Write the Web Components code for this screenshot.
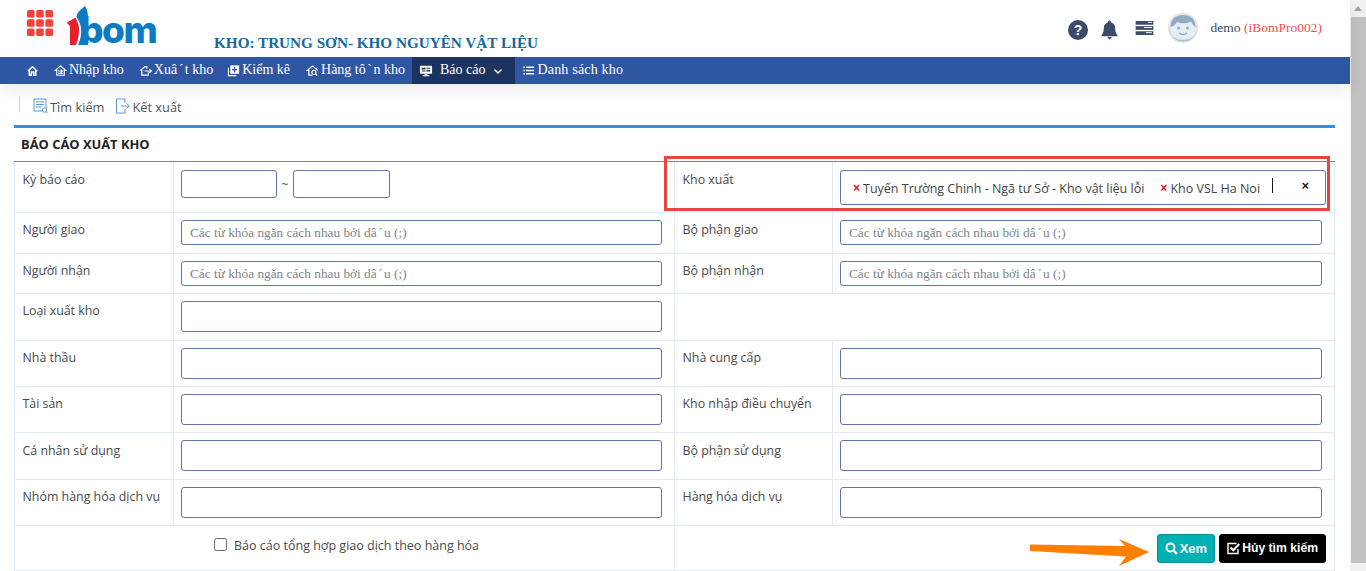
<!DOCTYPE html>
<html lang="vi">
<head>
<meta charset="utf-8">
<title>Báo cáo xuất kho</title>
<style>
  html, body { margin: 0; height: 100%; overflow: hidden; background: #fff; }
  body { font-family: "Open Sans", "Noto Sans", sans-serif; }
  .ac { margin: 0 1.500px; }
</style>
</head>
<body>
<app-shell>
  <app-header slot="head" store="KHO: TRUNG SƠN- KHO NGUYÊN VẬT LIỆU" user="demo" code="(iBomPro002)"></app-header>
  <app-nav slot="head">
    <nav-item icon="home"></nav-item>
    <nav-item icon="in" style="padding:0 8px 0 6px">Nhập kho</nav-item>
    <nav-item icon="out">Xuâ<span class="ac">´</span>t kho</nav-item>
    <nav-item icon="check" style="margin-right:2px">Kiểm kê</nav-item>
    <nav-item icon="stock">Hàng tô<span class="ac">`</span>n kho</nav-item>
    <nav-item icon="report" active caret>Báo cáo</nav-item>
    <nav-item icon="list" style="letter-spacing:.2px">Danh sách kho</nav-item>
  </app-nav>
  <tool-bar>
    <tool-btn icon="search">Tìm kiếm</tool-btn>
    <tool-btn icon="export">Kết xuất</tool-btn>
  </tool-bar>
  <report-form heading="BÁO CÁO XUẤT KHO">
    <form-row h="51">
      <form-cell first top label="Kỳ báo cáo"><date-range></date-range></form-cell>
      <form-cell top label="Kho xuất"><multi-select><sel-tag>Tuyến Trường Chinh - Ngã tư Sở - Kho vật liệu lỗi</sel-tag><sel-tag>Kho VSL Ha Noi</sel-tag></multi-select></form-cell>
    </form-row>
    <form-row h="41">
      <form-cell first label="Người giao"><text-box hint></text-box></form-cell>
      <form-cell label="Bộ phận giao"><text-box hint></text-box></form-cell>
    </form-row>
    <form-row h="40">
      <form-cell first label="Người nhận"><text-box hint></text-box></form-cell>
      <form-cell label="Bộ phận nhận"><text-box hint></text-box></form-cell>
    </form-row>
    <form-row h="47">
      <form-cell first label="Loại xuất kho"><text-box tall></text-box></form-cell>
      <form-cell></form-cell>
    </form-row>
    <form-row h="46">
      <form-cell first label="Nhà thầu"><text-box tall></text-box></form-cell>
      <form-cell label="Nhà cung cấp"><text-box tall></text-box></form-cell>
    </form-row>
    <form-row h="46">
      <form-cell first label="Tài sản"><text-box tall></text-box></form-cell>
      <form-cell label="Kho nhập điều chuyển"><text-box tall></text-box></form-cell>
    </form-row>
    <form-row h="47">
      <form-cell first top label="Cá nhân sử dụng"><text-box tall></text-box></form-cell>
      <form-cell top label="Bộ phận sử dụng"><text-box tall></text-box></form-cell>
    </form-row>
    <form-row h="46">
      <form-cell first label="Nhóm hàng hóa dịch vụ"><text-box tall></text-box></form-cell>
      <form-cell label="Hàng hóa dịch vụ"><text-box tall></text-box></form-cell>
    </form-row>
    <form-foot>
      <check-line slot="left">Báo cáo tổng hợp giao dịch theo hàng hóa</check-line>
      <action-btn slot="right" kind="view">Xem</action-btn>
      <action-btn slot="right" kind="clear">Hủy tìm kiếm</action-btn>
    </form-foot>
  </report-form>
  <note-marks></note-marks>
</app-shell>

<script>
  const ICONS = {
    home: '<path d="M2 7.500 7 3l5 4.500M3.500 6.500V12h2.200V8.500h2.600V12h2.200V6.500" fill="none" stroke="#fff" stroke-width="1.600"/>',
    in: '<path d="M7 2 1.500 6.800h1.500V12h8V6.800h1.500zM4.500 7.500h4.500M7.200 5.700 9 7.500 7.200 9.300M4.500 10h5" fill="none" stroke="#fff" stroke-width="1.200"/>',
    out: '<path d="M1.500 7 6 3h2.500l-.2 2M3 6v6h7V9M6 7.500h7M11 5.500l2.200 2L11 9.500" fill="none" stroke="#fff" stroke-width="1.300"/>',
    check: '<path d="M1.500 4v8.500H10" fill="none" stroke="#fff" stroke-width="1.200"/><rect x="3.500" y="1.500" width="9.500" height="9" fill="#fff"/><path d="M8.200 3v6M5.300 6h5.800" stroke="#2f56a3" stroke-width="1.300"/>',
    stock: '<path d="M7 2 1.500 6.800H3V12h4M7 2l5.500 4.800M11 5.500V4" fill="none" stroke="#fff" stroke-width="1.300"/><circle cx="8.500" cy="9" r="2.200" fill="none" stroke="#fff" stroke-width="1.200"/><path d="m10 10.500 2 2" stroke="#fff" stroke-width="1.300"/>',
    report: '<rect x="1" y="2" width="13" height="8.500" rx=".8" fill="#fff"/><path d="M3 4h4v2H3zM8 4h4v1H8zM8 6.500h4v1.500H8zM3 7h4v1H3z" fill="#1c3360"/><path d="M6 10.500h3V12h2v1H4v-1h2z" fill="#fff"/>',
    list: '<path d="M1.500 3.500h1.500M1.500 7h1.500M1.500 10.500h1.500M4.200 3.500H13M4.200 7H13M4.200 10.500H13" stroke="#fff" stroke-width="1.600" fill="none"/>'
  }

  class AppShell extends HTMLElement {
    constructor(){
      super()
      this.attachShadow({ mode: 'open' }).innerHTML = `
        <style>
          :host{ display: flex; height: 571px; width: 1366px; overflow: hidden; position: relative; }
          #page{ width: 1350px; display: flex; flex-direction: column; position: relative; }
          #head{ position: relative; z-index: 2; box-shadow: 0 6px 16px rgba(0,0,0,.08); }
          #bar{ width: 16px; background: #f1f1f1; position: relative; display: flex; flex-direction: column; align-items: center; }
          #arrow{ height: 17px; width: 100%; display: flex; align-items: center; justify-content: center; }
          #arrow i{ border: 4px solid transparent; border-top: 0; border-bottom: 5px solid #a3a3a3; }
          #thumb{ width: 15px; margin-left: 1px; height: 546px; background: #c1c1c1; }
        </style>
        <div id=page>
          <div id=head><slot name=head></slot></div>
          <slot></slot>
        </div>
        <div id=bar><div id=arrow><i></i></div><div id=thumb></div></div>`
    }
  }

  class AppHeader extends HTMLElement {
    constructor(){
      super()
      const dots = []
      for (let y = 0; y < 3; y++) for (let x = 0; x < 3; x++) dots.push(`<rect x="${x*9.200}" y="${y*9.200}" width="7.600" height="7.600" rx="1.500"/>`)
      this.attachShadow({ mode: 'open' }).innerHTML = `
        <style>
          :host{ display: flex; height: 57px; background: #fff; align-items: flex-start; }
          #grid{ margin: 10px 0 0 27px; width: 26px; height: 26px; fill: #f4423a; flex: none; }
          #logo{ margin: 5px 0 0 13px; width: 93px; height: 42px; position: relative; flex: none; }
          #logo svg{ position: absolute; left: 0; top: 0; }
          #logo span{ position: absolute; left: 14px; top: 3px; font: 800 37px/44px "Inter", "Open Sans", sans-serif; letter-spacing: -1.500px; color: #0f7ac4; }
          #store{ margin: 34px 0 0 55px; font: 700 15.200px/18px "Liberation Serif", serif; color: #14699f; white-space: nowrap; flex: 1; }
          #right{ display: flex; align-items: center; margin: 13px 28px 0 0; }
          svg.ico{ flex: none; }
          #user{ margin-left: 13px; font: 13.500px/18px "Liberation Serif", serif; color: #3f4d6b; white-space: nowrap; }
          #user b{ font-weight: 400; color: #f4504a; }
        </style>
        <svg id=grid viewBox="0 0 26 26">${dots.join('')}</svg>
        <div id=logo>
          <svg width="30" height="42" viewBox="0 0 30 42">
            <path d="M.7 17.700 9.500 12.500C12 17 13.500 22 13 27c-.3 5-1.500 9-3.300 13H4V21z" fill="#e7212c"/>
            <path d="M19 1C15 4 10.500 8 10.500 12 14 17 15.500 22 15.200 27c-.2 5-1.500 9-3 13H22V12c0-4-1-8-3-11z" fill="#0f7ac4"/>
          </svg>
          <span>bom</span>
        </div>
        <div id=store>${this.getAttribute('store')}</div>
        <div id=right>
          <svg class=ico style="margin:3px 13px 0 0" width="20" height="20" viewBox="0 0 20 20"><circle cx="10" cy="10" r="10" fill="#3c4a6b"/><text x="10" y="15" text-anchor="middle" font-family="Liberation Sans" font-weight="700" font-size="14" fill="#fff">?</text></svg>
          <svg class=ico style="margin:3px 17px 0 0" width="17" height="20" viewBox="0 0 18 20"><path d="M9 0a1.500 1.500 0 0 1 1.500 1.800C13.500 2.700 15 5 15 8c0 4 1 6 2.500 7.500v1H.5v-1C2 14 3 12 3 8c0-3 1.500-5.300 4.500-6.200A1.500 1.500 0 0 1 9 0z" fill="#3c4a6b"/><path d="M6.500 17.500h5L9 20z" fill="#3c4a6b"/></svg>
          <svg class=ico style="margin-right:14px" width="19" height="14" viewBox="0 0 19 15"><rect width="19" height="4" fill="#3c4a6b"/><rect y="5.500" width="19" height="4" fill="#3c4a6b"/><rect y="11" width="19" height="4" fill="#3c4a6b"/><path d="M13 1.500h4.500M9 7h8.500M11 12.500h6.500" stroke="#fff"/></svg>
          <svg class=ico width="30" height="30" viewBox="0 0 30 30"><circle cx="15" cy="15" r="15" fill="#dde2e6"/><circle cx="15" cy="14.500" r="12.500" fill="#e6edf3"/><path d="M2.500 14C2.500 6 8 2 15 2s12.500 4 12.500 12c-2-1-3.500-4-4.500-5.500-3 2-10 2.500-14 .5-1 2-3 4.500-6.500 5z" fill="#92abc4"/><circle cx="10.500" cy="15" r="1.500" fill="#92abc4"/><circle cx="19.500" cy="15" r="1.500" fill="#92abc4"/><path d="M11 20c2 2 6 2 8 0" fill="none" stroke="#92abc4" stroke-width="1.400"/><path d="M4 23c4 5 18 5 22 0 0 0-3 5.500-11 5.500S4 23 4 23z" fill="#b4c1cb"/></svg>
          <div id=user>${this.getAttribute('user')} <b>${this.getAttribute('code')}</b></div>
        </div>`
    }
  }

  class AppNav extends HTMLElement {
    constructor(){
      super()
      this.attachShadow({ mode: 'open' }).innerHTML = `
        <style>:host{ display: flex; height: 27px; background: #2f56a3; padding-left: 19px; }</style>
        <slot></slot>`
    }
  }

  class NavItem extends HTMLElement {
    constructor(){
      super()
      const caret = this.hasAttribute('caret')
      this.attachShadow({ mode: 'open' }).innerHTML = `
        <style>
          :host{ display: flex; align-items: center; height: 27px; padding: 0 7px; gap: 1px; color: #fff; font: 14px/25px "Liberation Serif", serif; white-space: nowrap; }
          :host([active]){ background: #1c3360; gap: 7px; padding: 0 11px 0 7px; }
          span{ margin-top: -2px; }
        </style>
        <svg width="14" height="14" viewBox="0 0 15 15">${ICONS[this.getAttribute('icon')]}</svg>
        <span><slot></slot></span>
        ${caret ? '<svg id=caret width="12" height="12" viewBox="0 0 12 12"><path d="M2.500 4.500 6 8l3.500-3.500" fill="none" stroke="#fff" stroke-width="1.400"/></svg>' : ''}`
    }
  }

  class ToolBar extends HTMLElement {
    constructor(){
      super()
      this.attachShadow({ mode: 'open' }).innerHTML = `
        <style>
          :host{ display: flex; height: 41px; padding: 12px 0 0 19px; box-sizing: border-box; align-items: flex-start; }
          #sep{ width: 1px; height: 16px; background: #c6d8e6; margin-right: 13px; }
          #items{ display: flex; gap: 11px; margin-top: 2px; }
        </style>
        <div id=sep></div>
        <div id=items><slot></slot></div>`
    }
  }

  class ToolBtn extends HTMLElement {
    constructor(){
      super()
      const art = this.getAttribute('icon') == 'search'
        ? '<path d="M1 1h12v10M1 1v12h8M3 4h8M3 6.500h8M3 9h5" fill="none" stroke="#5d9bc9"/><circle cx="11.500" cy="12" r="2.200" fill="#fff" stroke="#5d9bc9"/><path d="m13 13.500 2 2" stroke="#5d9bc9"/>'
        : '<path d="M10 5V1H1.500v14H10v-4M6 8h8M11.500 5.500 14.500 8l-3 2.500" fill="none" stroke="#5d9bc9"/>'
      this.attachShadow({ mode: 'open' }).innerHTML = `
        <style>
          :host{ display: flex; align-items: center; gap: 1px; color: #53565c; font: 12.800px/18px "Open Sans", sans-serif; white-space: nowrap; }
          svg{ margin-top: -2px; }
        </style>
        <svg width="16" height="16" viewBox="0 0 16 16">${art}</svg>
        <span><slot></slot></span>`
    }
  }

  class ReportForm extends HTMLElement {
    constructor(){
      super()
      this.attachShadow({ mode: 'open' }).innerHTML = `
        <style>
          :host{ display: block; margin: 0 15px 0 14px; border-top: 3px solid #2d8fe3; }
          h2{ margin: 0; height: 34px; box-sizing: border-box; padding-left: 7px; font: 700 12.900px/32px "Open Sans", sans-serif; color: #222; border-bottom: 1px solid #4a90d9; }
          #rows{ border: solid #e2ebf3; border-width: 0 1px; }
        </style>
        <h2>${this.getAttribute('heading')}</h2>
        <div id=rows><slot></slot></div>`
    }
  }

  class FormRow extends HTMLElement {
    constructor(){
      super()
      this.attachShadow({ mode: 'open' }).innerHTML = `
        <style>
          :host{ display: grid; grid-template-columns: 660px 659px; box-sizing: border-box; border-bottom: 1px solid #e2ebf3; }
        </style>
        <slot></slot>`
      this.style.height = this.getAttribute('h') + 'px'
    }
  }

  class FormCell extends HTMLElement {
    constructor(){
      super()
      const label = this.getAttribute('label')
      this.attachShadow({ mode: 'open' }).innerHTML = `
        <style>
          :host{ display: grid; grid-template-columns: 158px 1fr; min-height: 0; border-right: 1px solid #e2ebf3; }
          :host([first]){ grid-template-columns: 159px 1fr; }
          :host(:last-child){ border-right: 0; }
          #lab{ padding: 8px 0 0 7.500px; font: 12.400px/17px "Open Sans", sans-serif; color: #4a4a4a; border-right: 1px solid #e2ebf3; white-space: nowrap; }
          :host([top]) #lab{ padding-top: 9px; }
          #val{ padding: 7px 12px 0 7px; min-width: 0; }
        </style>
        ${label ? `<div id=lab>${label}</div><div id=val><slot></slot></div>` : ''}`
    }
  }

  class TextBox extends HTMLElement {
    constructor(){
      super()
      const hint = this.hasAttribute('hint') ? 'Các từ khóa ngăn cách nhau bởi dâ<span>´</span>u (;)' : ''
      this.attachShadow({ mode: 'open' }).innerHTML = `
        <style>
          :host{ display: block; height: 25px; box-sizing: border-box; border: 1px solid #5f76a8; border-radius: 3px; background: #fff; padding-left: 8px; font: 13.300px/23px "Liberation Serif", serif; color: #80858c; white-space: nowrap; overflow: hidden; }
          :host([tall]){ height: 31px; }
          span{ margin: 0 1.500px; }
        </style>${hint}`
    }
  }

  class DateRange extends HTMLElement {
    constructor(){
      super()
      this.attachShadow({ mode: 'open' }).innerHTML = `
        <style>
          :host{ display: flex; align-items: center; gap: 4.500px; height: 28px; margin-top: 1px; font: 12px "Open Sans", sans-serif; color: #555; }
          i{ display: block; height: 28px; box-sizing: border-box; border: 1px solid #5f76a8; border-radius: 3px; width: 96px; }
          i + span + i{ width: 97px; }
        </style>
        <i></i><span>~</span><i></i>`
    }
  }

  class MultiSelect extends HTMLElement {
    constructor(){
      super()
      this.attachShadow({ mode: 'open' }).innerHTML = `
        <style>
          :host{ display: flex; align-items: center; width: 486px; height: 35px; box-sizing: border-box; margin-top: 1px; border: 1px solid #5f76a8; border-radius: 3px; padding: 1px 0 0 12px; position: relative; }
          #caret{ width: 1px; height: 15px; background: #111; margin: -6px 0 0 12px; }
          #x{ position: absolute; right: 16px; top: 7px; font: 700 13px/16px "Liberation Sans", sans-serif; color: #222; }
        </style>
        <slot></slot><div id=caret></div><div id=x>×</div>`
    }
  }

  class SelTag extends HTMLElement {
    constructor(){
      super()
      this.attachShadow({ mode: 'open' }).innerHTML = `
        <style>
          :host{ display: flex; align-items: center; gap: 3px; margin-right: 16px; font: 12.500px/17px "Open Sans", sans-serif; color: #444; white-space: nowrap; }
          :host(:last-of-type){ margin-right: 0; }
          b{ color: #e3101c; font: 700 12px/17px "Liberation Sans", sans-serif; }
        </style>
        <b>×</b><span><slot></slot></span>`
    }
  }

  class FormFoot extends HTMLElement {
    constructor(){
      super()
      this.attachShadow({ mode: 'open' }).innerHTML = `
        <style>
          :host{ display: grid; grid-template-columns: 660px 659px; height: 45px; box-sizing: border-box; border-bottom: 1px solid #e2ebf3; }
          #l{ border-right: 1px solid #e2ebf3; padding: 10px 0 0 199px; }
          #r{ display: flex; justify-content: flex-end; gap: 4px; padding: 8px 8px 0 0; align-items: flex-start; }
        </style>
        <div id=l><slot name=left></slot></div>
        <div id=r><slot name=right></slot></div>`
    }
  }

  class CheckLine extends HTMLElement {
    constructor(){
      super()
      this.attachShadow({ mode: 'open' }).innerHTML = `
        <style>
          :host{ display: flex; align-items: center; gap: 7px; font: 12.500px/20px "Open Sans", sans-serif; color: #4a4a4a; white-space: nowrap; }
          i{ display: block; width: 13px; height: 13px; box-sizing: border-box; border: 1px solid #6b6b6b; border-radius: 2.500px; background: #fff; margin-top: -4px; }
        </style>
        <i></i><span><slot></slot></span>`
    }
  }

  class ActionBtn extends HTMLElement {
    constructor(){
      super()
      const view = this.getAttribute('kind') == 'view'
      const art = view
        ? '<circle cx="5.500" cy="5.500" r="4" fill="none" stroke="#fff" stroke-width="2"/><path d="m8.500 8.500 3.500 3.500" stroke="#fff" stroke-width="2.200"/>'
        : '<path d="M11 7v4.500H1V1.500h8.500" fill="none" stroke="#fff" stroke-width="1.400"/><path d="m3.500 5.500 2.800 2.800 6-6.300" fill="none" stroke="#fff" stroke-width="2"/>'
      this.attachShadow({ mode: 'open' }).innerHTML = `
        <style>
          :host{ display: flex; align-items: center; gap: 2px; height: 29px; box-sizing: border-box; padding: 0 7px; border-radius: 3px; font: 700 12.200px/27px "Liberation Sans", sans-serif; color: #fff; white-space: nowrap; background: #000; border: 1px solid #000; }
          :host([kind=view]){ background: #00b1b3; border-color: #0b8f99; font-size: 13px; }
        </style>
        <svg width="13" height="13" viewBox="0 0 13 13">${art}</svg>
        <span><slot></slot></span>`
    }
  }

  class NoteMarks extends HTMLElement {
    constructor(){
      super()
      this.attachShadow({ mode: 'open' }).innerHTML = `
        <style>
          :host{ display: block; position: absolute; left: 0; top: 0; width: 0; height: 0; }
          #box{ position: absolute; left: 664px; top: 156px; width: 666px; height: 55px; box-sizing: border-box; border: 3px solid #e5473f; }
          svg{ position: absolute; left: 1029px; top: 536px; }
        </style>
        <div id=box></div>
        <svg width="122" height="32" viewBox="0 0 122 32"><path d="M1 8.500 96 10 90 3l30 13-30 14 7-9.500L1 15z" fill="#ff8000"/></svg>`
    }
  }

  customElements.define('app-shell', AppShell)
  customElements.define('app-header', AppHeader)
  customElements.define('app-nav', AppNav)
  customElements.define('nav-item', NavItem)
  customElements.define('tool-bar', ToolBar)
  customElements.define('tool-btn', ToolBtn)
  customElements.define('report-form', ReportForm)
  customElements.define('form-row', FormRow)
  customElements.define('form-cell', FormCell)
  customElements.define('text-box', TextBox)
  customElements.define('date-range', DateRange)
  customElements.define('multi-select', MultiSelect)
  customElements.define('sel-tag', SelTag)
  customElements.define('form-foot', FormFoot)
  customElements.define('check-line', CheckLine)
  customElements.define('action-btn', ActionBtn)
  customElements.define('note-marks', NoteMarks)
</script>
</body>
</html>
